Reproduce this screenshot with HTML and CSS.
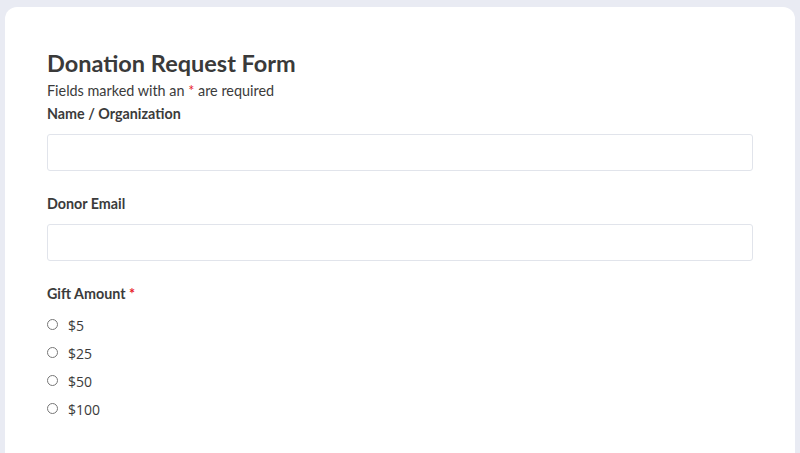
FILE: index.html
```html
<!DOCTYPE html>
<html lang="en">
<head>
  <meta charset="UTF-8" />
  <meta name="viewport" content="width=device-width, initial-scale=1.0"/>
  <title>Donation Request Form</title>
  <link rel="stylesheet" href="styles.css">
</head>
<body>
  <div class="card">
    <h1 class="title">Donation Request Form</h1>
    <p class="note">Fields marked with an <span class="req">*</span> are required</p>

    <div class="field">
      <label for="name">Name / Organization</label>
      <input type="text" id="name" autocomplete="off"/>
    </div>

    <div class="field">
      <label for="email">Donor Email</label>
      <input type="email" id="email" autocomplete="off"/>
    </div>

    <div class="field">
      <span class="group-label">Gift Amount <span class="req">*</span></span>
      <label class="option"><input type="radio" name="amount" value="5"/> <span>$5</span></label>
      <label class="option"><input type="radio" name="amount" value="25"/> <span>$25</span></label>
      <label class="option"><input type="radio" name="amount" value="50"/> <span>$50</span></label>
      <label class="option"><input type="radio" name="amount" value="100"/> <span>$100</span></label>
    </div>
  </div>
</body>
</html>
```

FILE: styles.css
```css
body {
  margin: 0;
  padding: 7px 5px 0;
  font-family: Lato, 'Noto Sans', sans-serif;
  color: #3b3b3b;
  background: #e9ebf3;
  overflow: hidden;
}

.card {
  box-sizing: border-box;
  background: #fff;
  border-radius: 12px 12px 0 0;
  padding: 41px 42px 0;
  height: 446px;
}

.title {
  margin: 0;
  font-size: 23.5px;
  font-weight: 700;
  line-height: 30px;
  color: #3a3a3a;
}

.note {
  margin: 2px 0 0;
  font-size: 14.4px;
  line-height: 21px;
}

.req { color: #e8202a; }

.field {
  margin-top: 4px;
  margin-bottom: 24px;
}

.field label, .group-label {
  display: block;
  font-size: 14.3px;
  font-weight: 700;
  line-height: 18px;
  margin-bottom: 11px;
}

.group-label { margin-bottom: 9px; }

.field input[type=text], .field input[type=email] {
  display: block;
  box-sizing: border-box;
  width: 100%;
  height: 37px;
  border: 1px solid #e1e4eb;
  border-radius: 3px;
  background: #fff;
}

.field .option {
  display: flex;
  align-items: center;
  font-weight: 400;
  font-family: 'Open Sans', sans-serif;
  font-size: 14px;
  height: 28px;
  margin: 0;
}

.option input {
  margin: 0 10px 0 0;
  width: 11px;
  height: 11px;
  position: relative;
  top: -2px;
}
```
